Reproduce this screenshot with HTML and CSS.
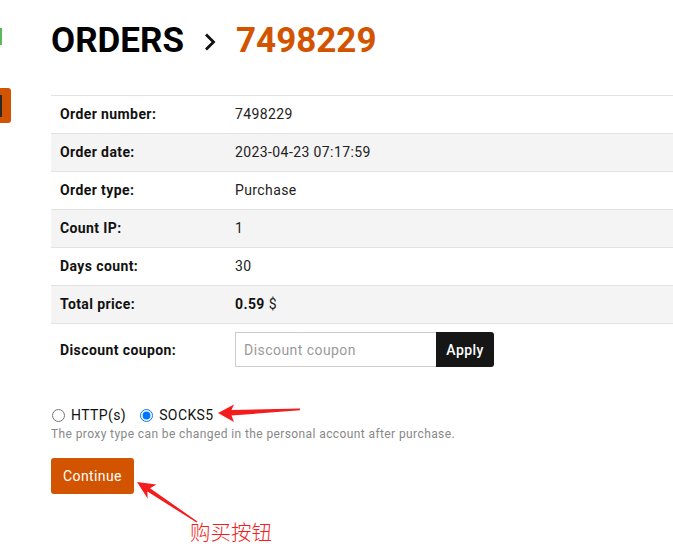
FILE: index.html
```html
<!DOCTYPE html>
<html lang="en">
<head>
    <meta charset="UTF-8">
    <meta name="viewport" content="width=device-width, initial-scale=1.0">
    <title>Orders - 7498229</title>
    <link rel="stylesheet" href="styles.css">
</head>
<body>
    <div class="page">
        <aside class="side">
            <span class="side-mark"></span>
            <span class="side-btn"><span class="side-btn-icon"></span></span>
        </aside>

        <main class="content">
            <h1 class="title">
                ORDERS
                <svg class="crumb" width="12" height="18" viewBox="0 0 12 18">
                    <path d="M2 1.5 L9.5 9 L2 16.5" fill="none" stroke="#111" stroke-width="2.8"/>
                </svg>
                <span class="order-num">7498229</span>
            </h1>

            <div class="details">
                <div class="row">
                    <div class="label">Order number:</div>
                    <div class="value">7498229</div>
                </div>
                <div class="row">
                    <div class="label">Order date:</div>
                    <div class="value">2023-04-23 07:17:59</div>
                </div>
                <div class="row">
                    <div class="label">Order type:</div>
                    <div class="value">Purchase</div>
                </div>
                <div class="row">
                    <div class="label">Count IP:</div>
                    <div class="value">1</div>
                </div>
                <div class="row">
                    <div class="label">Days count:</div>
                    <div class="value">30</div>
                </div>
                <div class="row">
                    <div class="label">Total price:</div>
                    <div class="value"><b>0.59</b> $</div>
                </div>
                <div class="row row-coupon">
                    <div class="label">Discount coupon:</div>
                    <div class="value">
                        <form class="coupon">
                            <input type="text" class="coupon-input" placeholder="Discount coupon">
                            <button type="button" class="coupon-btn">Apply</button>
                        </form>
                    </div>
                </div>
            </div>

            <div class="proxy">
                <label class="proxy-opt"><input type="radio" name="proxy" value="http"> HTTP(s)</label>
                <label class="proxy-opt"><input type="radio" name="proxy" value="socks5" checked> SOCKS5</label>
            </div>
            <p class="hint">The proxy type can be changed in the personal account after purchase.</p>

            <button type="button" class="continue">Continue</button>
        </main>

        <!-- annotations drawn over the screenshot -->
        <svg class="notes" width="673" height="558" viewBox="0 0 673 558">
            <polygon fill="#f31d1d" points="218,413 234,404.5 231.5,410 300,408.5 300,410.3 231.5,415.5 234,422"/>
            <polygon fill="#f31d1d" points="137,482 156.4,484.6 150,488.2 197.4,521.4 196.6,522.6 147.4,491.6 147.6,498.4"/>
        </svg>
        <span class="note">购买按钮</span>
    </div>
</body>
</html>
```

FILE: styles.css
```css
* {
    box-sizing: border-box;
    margin: 0;
    padding: 0;
}

body {
    font-family: Roboto, "Liberation Sans", Arial, sans-serif;
    font-size: 14px;
    letter-spacing: 0.4px;
    color: #222;
    background-color: #fff;
    overflow: hidden;
}

.page {
    position: relative;
    display: flex;
    width: 673px;
    height: 558px;
}

.side {
    width: 11px;
    flex-shrink: 0;
    display: flex;
    flex-direction: column;
}

.side-mark {
    width: 2px;
    height: 17px;
    margin-top: 28px;
    background-color: #5cb85c;
}

.side-btn {
    width: 11px;
    height: 35px;
    margin-top: 43px;
    background-color: #d35400;
    border-radius: 0 3px 3px 0;
    display: flex;
    align-items: center;
}

.side-btn-icon {
    width: 2px;
    height: 22px;
    background-color: #2a2a2a;
}

.content {
    flex: 1;
    padding-left: 40px;
}

.title {
    margin-top: 19px;
    font-size: 35px;
    line-height: 44px;
    font-weight: 700;
    letter-spacing: 0;
    color: #000;
    display: flex;
    align-items: center;
    gap: 20px;
}

.crumb {
    margin-top: 2px;
}

.order-num {
    color: #d35400;
}

.details {
    margin-top: 32px;
}

.row {
    display: grid;
    grid-template-columns: 184px 1fr;
    align-items: center;
    height: 38px;
    padding-bottom: 1px;
    border-top: 1px solid #e2e2e2;
}

.row:nth-child(even) {
    background-color: #f4f4f4;
}

.label {
    padding-left: 9px;
    font-weight: 700;
    color: #111;
}

.value {
    color: #222;
}

.value b {
    color: #111;
}

.row-coupon {
    height: auto;
    padding: 8px 0;
}

.coupon {
    display: flex;
}

.coupon-input {
    width: 201px;
    height: 35px;
    padding: 0 8px;
    border: 1px solid #ccc;
    border-right: none;
    font-family: inherit;
    font-size: 14px;
    letter-spacing: 0.45px;
    color: #333;
}

.coupon-input::placeholder {
    color: #9a9a9a;
}

.coupon-btn {
    width: 58px;
    height: 35px;
    border: none;
    border-radius: 0 3px 3px 0;
    background-color: #161616;
    color: #fff;
    font-family: inherit;
    font-size: 14px;
    font-weight: 500;
    letter-spacing: 0.4px;
}

.proxy {
    margin-top: 30px;
    display: flex;
    gap: 13px;
    line-height: 20px;
    color: #111;
}

.proxy-opt {
    display: flex;
    align-items: center;
    gap: 6px;
}

.proxy-opt input {
    margin: 0 0 0 1px;
    width: 13px;
    height: 13px;
}

.hint {
    margin-top: 1px;
    font-size: 12px;
    line-height: 16px;
    color: #888;
}

.continue {
    margin-top: 16px;
    height: 36px;
    padding: 0 12px;
    border: none;
    border-radius: 3px;
    background-color: #d35400;
    color: #fff;
    font-family: inherit;
    font-size: 14px;
    letter-spacing: 0.4px;
}

.notes {
    position: absolute;
    top: 0;
    left: 0;
    pointer-events: none;
}

.note {
    position: absolute;
    left: 190px;
    top: 517px;
    font-family: "Noto Sans CJK SC", sans-serif;
    font-size: 20.5px;
    font-weight: 300;
    line-height: 28px;
    letter-spacing: 0;
    color: #f31d1d;
}
```
